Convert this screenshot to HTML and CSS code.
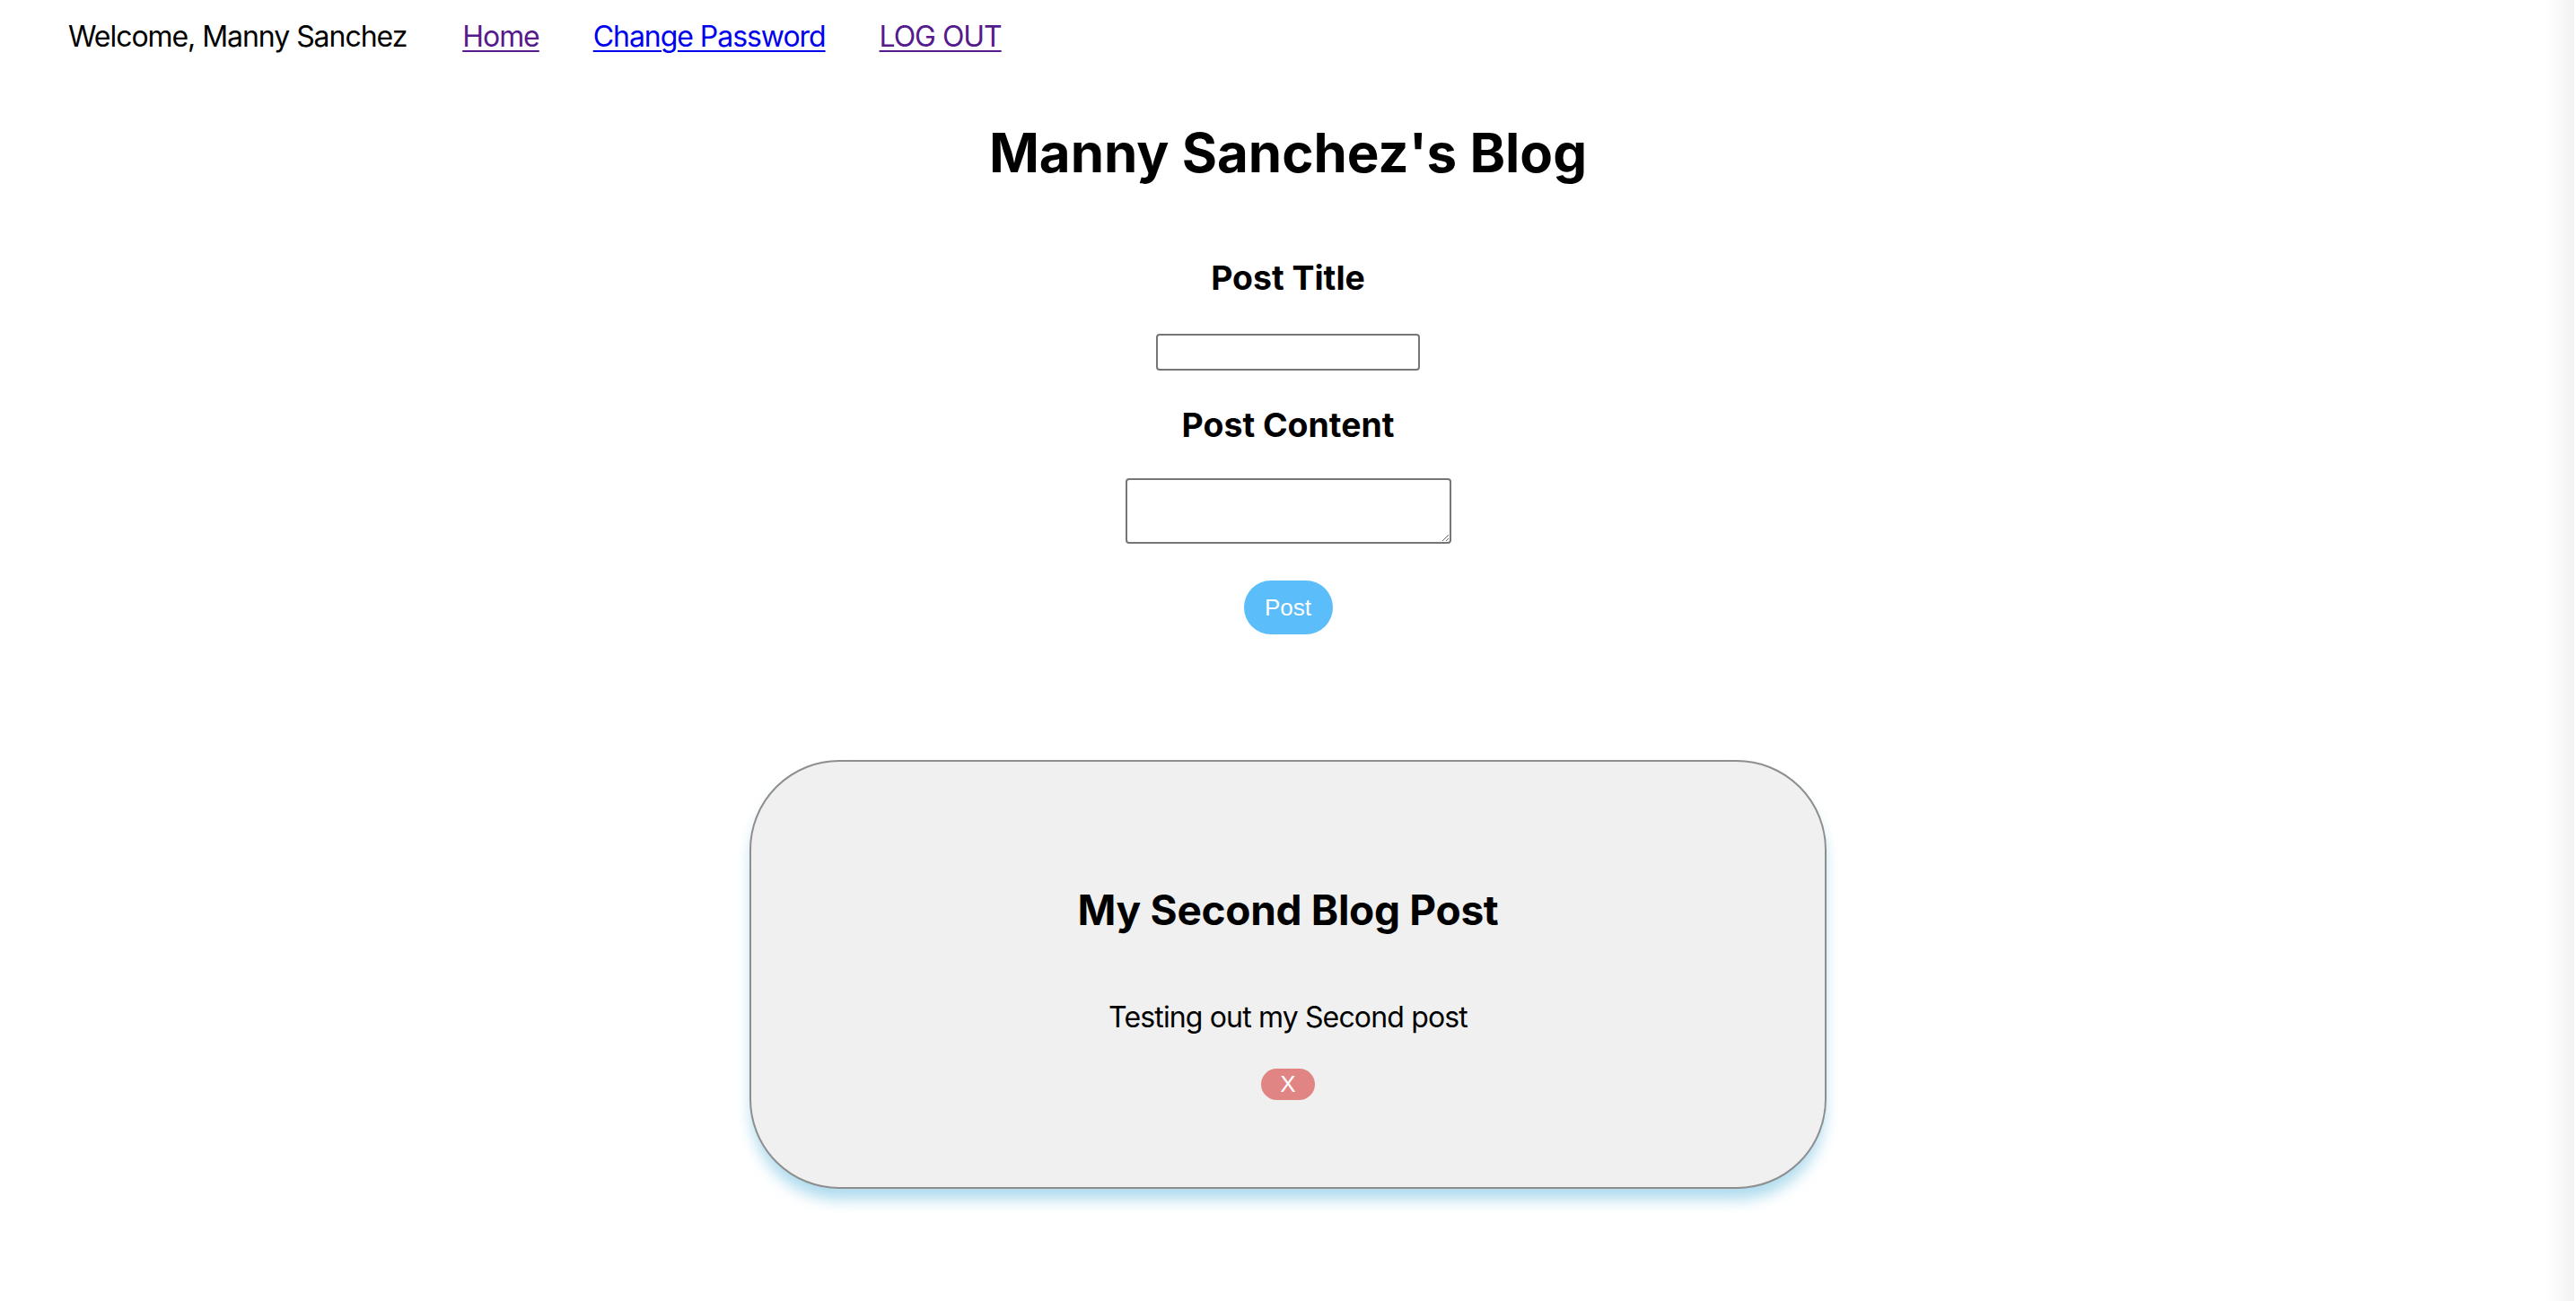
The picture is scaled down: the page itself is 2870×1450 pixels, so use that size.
FILE: index.html
```html
<!DOCTYPE html>
<html lang="en">
<head>
<meta charset="utf-8">
<title>Manny Sanchez's Blog</title>
<link rel="stylesheet" href="styles.css">
</head>
<body>
<nav class="nav">
  <span class="welcome">Welcome, Manny Sanchez</span>
  <a class="link visited" href="#home">Home</a>
  <a class="link" href="#password">Change Password</a>
  <a class="link visited" href="#logout">LOG OUT</a>
</nav>
<main class="main">
  <h1 class="blog-title">Manny Sanchez's Blog</h1>
  <form class="post-form">
    <h3 class="label">Post Title</h3>
    <input class="title-input" type="text">
    <h3 class="label label-content">Post Content</h3>
    <textarea class="content-input"></textarea>
    <button class="post-btn" type="button">Post</button>
  </form>
  <section class="card">
    <h2 class="card-title">My Second Blog Post</h2>
    <p class="card-text">Testing out my Second post</p>
    <button class="delete-btn" type="button">X</button>
  </section>
</main>
<div class="scroll-edge"></div>
</body>
</html>
```
FILE: styles.css
```css
html, body {
  margin: 0;
  padding: 0;
  background: #fff;
}
body {
  font-family: Inter, "Noto Sans", sans-serif;
  font-size: 32px;
  color: #000;
}
.nav {
  display: flex;
  align-items: center;
  gap: 60px;
  padding: 21px 0 0 76px;
  line-height: 39px;
  letter-spacing: -1.05px;
}
.welcome {
  margin-right: 2px;
}
.link {
  color: #0000ee;
  text-decoration: underline;
  text-decoration-thickness: 2px;
  text-underline-offset: 4px;
}
.link.visited {
  color: #551a8b;
}
.main {
  display: flex;
  flex-direction: column;
  align-items: center;
  padding-bottom: 60px;
}
.blog-title {
  margin: 74px 0 0;
  font-size: 60px;
  font-weight: 700;
  line-height: 73px;
}
.post-form {
  display: flex;
  flex-direction: column;
  align-items: center;
}
.label {
  margin: 80px 0 0;
  font-size: 37.4px;
  font-weight: 700;
  line-height: 45px;
}
.label-content {
  margin-top: 38px;
}
.title-input {
  box-sizing: border-box;
  margin-top: 40px;
  width: 294px;
  height: 41px;
  border: 2px solid #767676;
  border-radius: 4px;
  background: #fff;
}
.content-input {
  box-sizing: border-box;
  margin-top: 37px;
  width: 363px;
  height: 73px;
  border: 2px solid #767676;
  border-radius: 4px;
  background: #fff;
}
.post-btn {
  margin-top: 41px;
  width: 99px;
  height: 60px;
  border: none;
  border-radius: 30px;
  background: #5bbdf9;
  color: #fff;
  font-family: "Liberation Sans", Arial, sans-serif;
  font-size: 26px;
  padding: 0;
}
.card {
  box-sizing: border-box;
  margin-top: 140px;
  width: 1200px;
  height: 478px;
  padding-top: 137px;
  display: flex;
  flex-direction: column;
  align-items: center;
  background: #f0f0f0;
  border: 2px solid #8e8e8e;
  border-radius: 100px;
  box-shadow: 0 14px 16px -2px rgba(150, 208, 232, 0.75);
}
.card-title {
  margin: 0;
  font-size: 46px;
  font-weight: 700;
  line-height: 56px;
  letter-spacing: -0.3px;
}
.card-text {
  margin: 72px 0 0;
  line-height: 39px;
  letter-spacing: -0.85px;
}
.delete-btn {
  margin-top: 38px;
  width: 60px;
  height: 35px;
  padding: 0;
  border: none;
  border-radius: 18px;
  background: #e08584;
  color: #fff;
  font-family: "Liberation Sans", Arial, sans-serif;
  font-size: 26px;
}
.scroll-edge {
  position: fixed;
  top: 0;
  right: 2px;
  width: 32px;
  height: 100%;
  background: linear-gradient(to right, rgba(0,0,0,0), rgba(0,0,0,0.05));
}
```
